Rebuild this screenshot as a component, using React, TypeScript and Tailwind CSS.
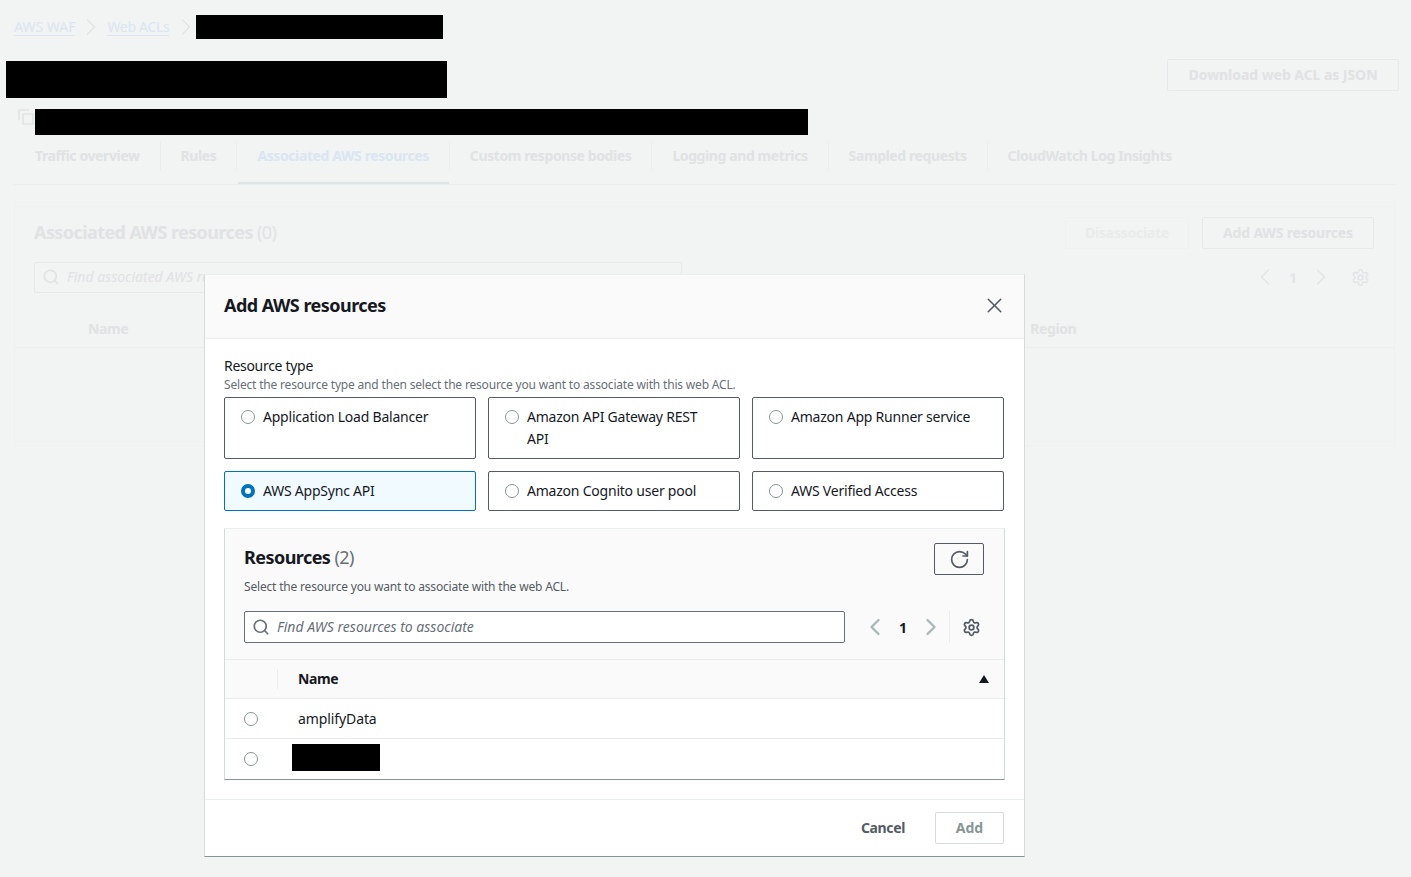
import { ChevronLeft, ChevronRight, RotateCw, Search, Settings, X } from 'lucide-react';

const tabs = ['Traffic overview', 'Rules', 'Associated AWS resources', 'Custom response bodies', 'Logging and metrics', 'Sampled requests', 'CloudWatch Log Insights'];

const tiles = [
  { label: 'Application Load Balancer', rowH: 'h-[62px]' },
  { label: 'Amazon API Gateway REST API', rowH: 'h-[62px]' },
  { label: 'Amazon App Runner service', rowH: 'h-[62px]' },
  { label: 'AWS AppSync API', rowH: 'h-[40px]', checked: true },
  { label: 'Amazon Cognito user pool', rowH: 'h-[40px]' },
  { label: 'AWS Verified Access', rowH: 'h-[40px]' },
];

const Radio = ({ checked }: { checked?: boolean }) =>
  checked ? (
    <span className="block h-[14px] w-[14px] shrink-0 rounded-full border-[4px] border-[#0073bb] bg-white" />
  ) : (
    <span className="block h-[14px] w-[14px] shrink-0 rounded-full border border-[#879596] bg-white" />
  );

const Background = () => (
  <div className="h-[877px] bg-[#f2f3f3] pl-[14px] pr-[16px] pt-[15px]">
    <div className="flex h-[24px] items-center text-[14px] text-[#d9e6f1]">
      <span className="border-b border-[#d9e6f1] leading-[17px]">AWS WAF</span>
      <ChevronRight size={28} strokeWidth={1.2} className="mx-[2px] text-[#e0e3e4]" />
      <span className="border-b border-[#d9e6f1] leading-[17px] tracking-[-0.3px]">Web ACLs</span>
      <ChevronRight size={28} strokeWidth={1.2} className="ml-[3px] mr-[-4px] text-[#e0e3e4]" />
      <div className="h-[24px] w-[247px] bg-black" />
    </div>
    <div className="mt-[20px] flex h-[38px] items-start justify-between">
      <div className="-ml-[8px] mt-[2px] h-[37px] w-[441px] bg-black" />
      <button className="mr-[-4px] h-[32px] w-[232px] rounded-[2px] border border-[#e6e8e9] pb-[2px] text-[14px] font-bold tracking-[-0.05px] text-[#e0e2e3]">
        Download web ACL as JSON
      </button>
    </div>
    <div className="mt-[12px] flex h-[26px] items-start">
      <svg width="17" height="16" viewBox="0 0 17 16" fill="none" stroke="#e0e3e4" strokeWidth="1.5" className="ml-[4px] shrink-0">
        <path d="M1 11V1h10" />
        <rect x="5" y="5" width="10" height="10" />
      </svg>
      <div className="h-[26px] w-[773px] bg-black" />
    </div>
    <div className="mt-[6px] flex h-[44px] border-b border-[#eaeded] pl-[1px]">
      {tabs.map((tab, i) => (
        <div
          key={tab}
          className={`relative flex h-[30px] items-center px-[20px] pb-[2px] text-[14px] font-bold tracking-[-0.4px] ${i < tabs.length - 1 ? 'border-r border-[#eaeded]' : ''} ${i === 2 ? 'text-[#d9e6f1]' : 'text-[#e0e2e3]'}`}
        >
          {tab}
          {i === 2 && <span className="absolute -bottom-[13px] left-[1px] right-0 h-[2px] bg-[#e0e3e4]" />}
        </div>
      ))}
    </div>
    <div className="mt-[17px] h-[244px] rounded-[1px] border border-[#eff1f1] pl-[19px] pr-[20px] pt-[14px]">
      <div className="flex h-[32px] items-center justify-between">
        <div className="mb-[2px] text-[18px] font-bold tracking-[-0.58px] text-[#e0e2e3]">
          Associated AWS resources <span className="font-normal">(0)</span>
        </div>
        <div className="flex gap-[13px]">
          <button className="h-[32px] w-[124px] rounded-[2px] border border-[#eff1f1] pb-[2px] text-[14px] font-bold tracking-[-0.25px] text-[#e9ebeb]">Disassociate</button>
          <button className="h-[32px] w-[172px] rounded-[2px] border border-[#e6e8e9] pb-[2px] text-[14px] font-bold tracking-[-0.18px] text-[#e0e2e3]">Add AWS resources</button>
        </div>
      </div>
      <div className="mt-[12px] flex h-[32px] items-center">
        <div className="flex h-[31px] w-[648px] items-center rounded-[2px] border border-[#e6e8e9] pb-[1px] pl-[7px] text-[14px] italic text-[#e0e2e3]">
          <Search size={18} strokeWidth={2.3} className="mr-[7px]" />
          Find associated AWS resources
        </div>
        <div className="ml-auto mr-[4px] flex items-center text-[#e3e5e6]">
          <ChevronLeft size={28} strokeWidth={1.4} />
          <span className="mx-[10px] w-[8px] text-center text-[14px] font-bold">1</span>
          <ChevronRight size={28} strokeWidth={1.4} />
          <Settings size={19} strokeWidth={2.2} className="ml-[16px]" />
        </div>
      </div>
      <div className="-ml-[19px] -mr-[20px] mt-[17px] flex h-[38px] items-center border-b border-[#eaeded] text-[14px] font-bold tracking-[-0.4px] text-[#e0e2e3]">
        <span className="ml-[73px]">Name</span>
        <span className="ml-[902px]">Region</span>
      </div>
    </div>
  </div>
);

const Modal = () => (
  <div className="absolute left-[204px] top-[274px] h-[583px] w-[821px] border-r border-b border-l border-t border-r-[#d5dbdb] border-b-[#879596] border-l-[#d5dbdb] border-t-[#eaeded] bg-white text-[#16191f]">
    <div className="flex h-[64px] items-center justify-between border-b border-[#eaeded] bg-[#fafafa] pl-[19px] pr-[17px]">
      <h2 className="mb-[3px] text-[18px] font-bold tracking-[-0.53px]">Add AWS resources</h2>
      <X size={25} strokeWidth={1.5} className="mb-[2px] text-[#545b64]" />
    </div>
    <div className="px-[19px] pt-[17px]">
      <div className="text-[14px] leading-[20px] tracking-[-0.3px]">Resource type</div>
      <div className="text-[12px] leading-[17px] tracking-[-0.18px] text-[#687078]">Select the resource type and then select the resource you want to associate with this web ACL.</div>
      <div className="mt-[4px] grid w-[780px] grid-cols-3 gap-[12px]">
        {tiles.map((tile) => (
          <div
            key={tile.label}
            className={`flex gap-[8px] rounded-[2px] border px-[16px] pt-[8px] text-[14px] leading-[22px] tracking-[-0.22px] ${tile.rowH} ${tile.checked ? 'border-[#0073bb] bg-[#f1faff]' : 'border-[#545b64] bg-white'}`}
          >
            <span className="mt-[4px]">
              <Radio checked={tile.checked} />
            </span>
            <span className="max-w-[185px]">{tile.label}</span>
          </div>
        ))}
      </div>
      <div className="mt-[17px] h-[252px] w-[781px] rounded-[1px] border-r border-b border-l border-t border-r-[#d5dbdb] border-b-[#879596] border-l-[#d5dbdb] border-t-[#eaeded] bg-white">
        <div className="bg-[#fafafa] px-[19px] pt-[14px]">
          <div className="flex h-[32px] items-start justify-between">
            <div className="mt-[1px] text-[18px] font-bold tracking-[-0.55px]">
              Resources <span className="font-normal text-[#687078]">(2)</span>
            </div>
            <button className="mr-[1px] flex h-[32px] w-[50px] items-center justify-center rounded-[2px] border border-[#545b64] text-[#545b64]">
              <RotateCw size={21} strokeWidth={1.9} />
            </button>
          </div>
          <div className="mt-[4px] text-[12px] leading-[16px] tracking-[-0.18px] text-[#545b64]">Select the resource you want to associate with the web ACL.</div>
          <div className="mt-[16px] flex h-[32px] items-center">
            <div className="flex h-[32px] w-[601px] shrink-0 items-center rounded-[2px] border border-[#687078] bg-white pb-[1px] pl-[7px] text-[14px] italic text-[#687078]">
              <Search size={18} strokeWidth={2.3} className="mr-[7px] text-[#687078]" />
              Find AWS resources to associate
            </div>
            <div className="ml-[16px] flex items-center">
              <ChevronLeft size={28} strokeWidth={2} className="text-[#aab7b8]" />
              <span className="mx-[10px] w-[8px] text-center text-[14px] font-bold">1</span>
              <ChevronRight size={28} strokeWidth={2} className="text-[#aab7b8]" />
            </div>
            <div className="ml-[4px] flex h-[32px] items-center border-l border-[#eaeded] pl-[12px]">
              <Settings size={19} strokeWidth={2.2} className="text-[#545b64]" />
            </div>
          </div>
        </div>
        <div className="bg-[#fafafa] pt-[16px]">
          <div className="flex h-[40px] items-center border-y border-[#eaeded] pr-[15px]">
            <div className="ml-[52px] h-[20px] border-l border-[#eaeded]" />
            <span className="mb-[2px] ml-[20px] text-[14px] font-bold tracking-[-0.4px]">Name</span>
            <span className="ml-auto h-0 w-0 border-x-[5px] border-b-[8px] border-x-transparent border-b-[#16191f]" />
          </div>
        </div>
        <div className="flex h-[40px] items-center border-b border-[#eaeded] pl-[19px] text-[14px]">
          <Radio />
          <span className="ml-[40px] tracking-[-0.1px]">amplifyData</span>
        </div>
        <div className="flex h-[40px] items-center pl-[19px]">
          <Radio />
          <div className="ml-[34px] mt-[5px] h-[27px] w-[88px] self-start bg-black" />
        </div>
      </div>
    </div>
    <div className="mt-[19px] flex h-[57px] items-center justify-end gap-[30px] border-t border-[#eaeded] pr-[20px] text-[14px] font-bold">
      <span className="mb-[2px] tracking-[-0.37px] text-[#545b64]">Cancel</span>
      <button className="h-[32px] w-[69px] rounded-[2px] border border-[#d5dbdb] pb-[2px] font-bold text-[#879596]">Add</button>
    </div>
  </div>
);

export default function App() {
  return (
    <div className="relative h-[877px] overflow-hidden font-['Noto_Sans','Open_Sans',sans-serif]">
      <Background />
      <Modal />
    </div>
  );
}
